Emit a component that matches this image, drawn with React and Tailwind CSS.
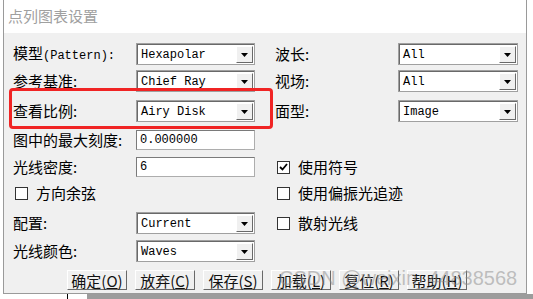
const cjk = "font-['Noto_Sans_CJK_SC',sans-serif]";
const mono = "font-['Liberation_Mono','Noto_Sans_CJK_SC',monospace]";

const Arrow = () => (
  <div className="flex h-full w-[17px] items-center justify-center border-t border-l border-r border-b border-t-white border-l-white border-r-[#696969] border-b-[#696969] bg-[#f0f0f0]">
    <svg width="7" height="4" viewBox="0 0 7 4">
      <path d="M0 0h7L3.5 4z" fill="#000" />
    </svg>
  </div>
);

const Combo = ({ value, w = 'w-[119px]' }) => (
  <div className={`${w} h-[22px] border border-[#a0a0a0]`}>
    <div className="flex h-full items-stretch border-t border-l border-t-[#696969] border-l-[#696969] bg-white">
      <div className={`flex-1 pl-[3px] text-[12px] leading-[20px] text-black ${mono}`}>{value}</div>
      <div className="p-[1px]">
        <Arrow />
      </div>
    </div>
  </div>
);

const TextBox = ({ value }) => (
  <div className="flex h-[20px] w-[119px] items-center border border-[#adadad] border-t-[#7a7a7a] border-l-[#7a7a7a] bg-white pl-[3px]">
    <span className={`text-[12px] leading-none text-black ${mono}`}>{value}</span>
  </div>
);

const Check = ({ label, checked }) => (
  <div className="ml-[2px] flex items-center gap-[8px]">
    <div className="flex h-[13px] w-[13px] items-center justify-center border border-[#333] bg-white">
      {checked && (
        <svg width="9" height="8" viewBox="0 0 9 8">
          <path d="M1 4l2.5 2.5L8 1" stroke="#000" strokeWidth="1.8" fill="none" />
        </svg>
      )}
    </div>
    <span className={`text-[15px] leading-[18px] text-black ${cjk}`}>{label}</span>
  </div>
);

const Label = ({ children }) => (
  <div className={`w-[123px] text-[15px] leading-[20px] text-black ${cjk}`}>{children}</div>
);

const Btn = ({ text, k }) => (
  <div className={`flex h-[20px] w-[60px] items-center justify-center border border-t-white border-l-white border-r-[#696969] border-b-[#696969] bg-[#f0f0f0] text-[15px] leading-none text-[#111] ${cjk}`}>
    {text}(<span className="underline">{k}</span>)
  </div>
);

export default function App() {
  return (
    <div className="relative h-[299px] w-[533px] overflow-hidden bg-white">
      <div className="ml-[3px] h-[294px] w-[524px] border-l border-r border-b border-[#9a9a9a] bg-[#f0f0f0]">
        {/* title */}
        <div className={`flex h-[33px] items-center bg-white pl-[4px] text-[15px] text-[#a0a0a0] ${cjk}`}>
          点列图表设置
        </div>

        <div className="pl-[9px] pt-[10px]">
          <div className="flex h-[22px] items-center">
            <div className="flex w-[262px] items-center">
              <Label>
                模型<span className={`text-[12px] ${mono}`}>(Pattern):</span>
              </Label>
              <Combo value="Hexapolar" />
            </div>
            <div className="flex items-center">
              <Label>波长:</Label>
              <Combo value="All" w="w-[120px]" />
            </div>
          </div>

          <div className="mt-[5px] flex h-[22px] items-center">
            <div className="flex w-[262px] items-center">
              <Label>参考基准:</Label>
              <Combo value="Chief Ray" />
            </div>
            <div className="flex items-center">
              <Label>视场:</Label>
              <Combo value="All" w="w-[120px]" />
            </div>
          </div>

          <div className="mt-[8px] flex h-[22px] items-center">
            <div className="flex w-[262px] items-center">
              <Label>查看比例:</Label>
              <Combo value="Airy Disk" />
            </div>
            <div className="flex items-center">
              <Label>面型:</Label>
              <Combo value="Image" w="w-[120px]" />
            </div>
          </div>

          <div className="mt-[8px] flex h-[20px] items-center">
            <Label>图中的最大刻度:</Label>
            <TextBox value="0.000000" />
          </div>

          <div className="mt-[7px] flex h-[20px] items-center">
            <div className="flex w-[262px] items-center">
              <Label>光线密度:</Label>
              <TextBox value="6" />
            </div>
            <Check label="使用符号" checked />
          </div>

          <div className="mt-[7px] flex h-[18px] items-center">
            <div className="w-[262px]">
              <Check label="方向余弦" />
            </div>
            <Check label="使用偏振光追迹" />
          </div>

          <div className="mt-[10px] flex h-[22px] items-center">
            <div className="flex w-[262px] items-center">
              <Label>配置:</Label>
              <Combo value="Current" />
            </div>
            <Check label="散射光线" />
          </div>

          <div className="mt-[6px] flex h-[22px] items-center">
            <Label>光线颜色:</Label>
            <Combo value="Waves" />
          </div>

          <div className="ml-[54px] mt-[8px] flex gap-[8px]">
            <Btn text="确定" k="O" />
            <Btn text="放弃" k="C" />
            <Btn text="保存" k="S" />
            <Btn text="加载" k="L" />
            <Btn text="复位" k="R" />
            <Btn text="帮助" k="H" />
          </div>
        </div>
      </div>

      {/* window behind */}
      <div className="flex h-[5px]">
        <div className="w-[67px]" />
        <div className="w-[1px] bg-black" />
        <div className="w-[19px]" />
        <div className="flex-1 bg-[#9c9c9c]" />
      </div>

      {/* annotation */}
      <div className="absolute left-[9px] top-[88px] h-[41px] w-[264px] rounded-[4px] border-[3px] border-[#f02424]" />

      {/* watermark */}
      <div className="pointer-events-none absolute left-[279px] top-[268px] font-['Liberation_Sans',sans-serif] text-[20px] leading-[20px] text-[#8a8a8a]/50">
        CSDN @weixin_44838568
      </div>
    </div>
  );
}
